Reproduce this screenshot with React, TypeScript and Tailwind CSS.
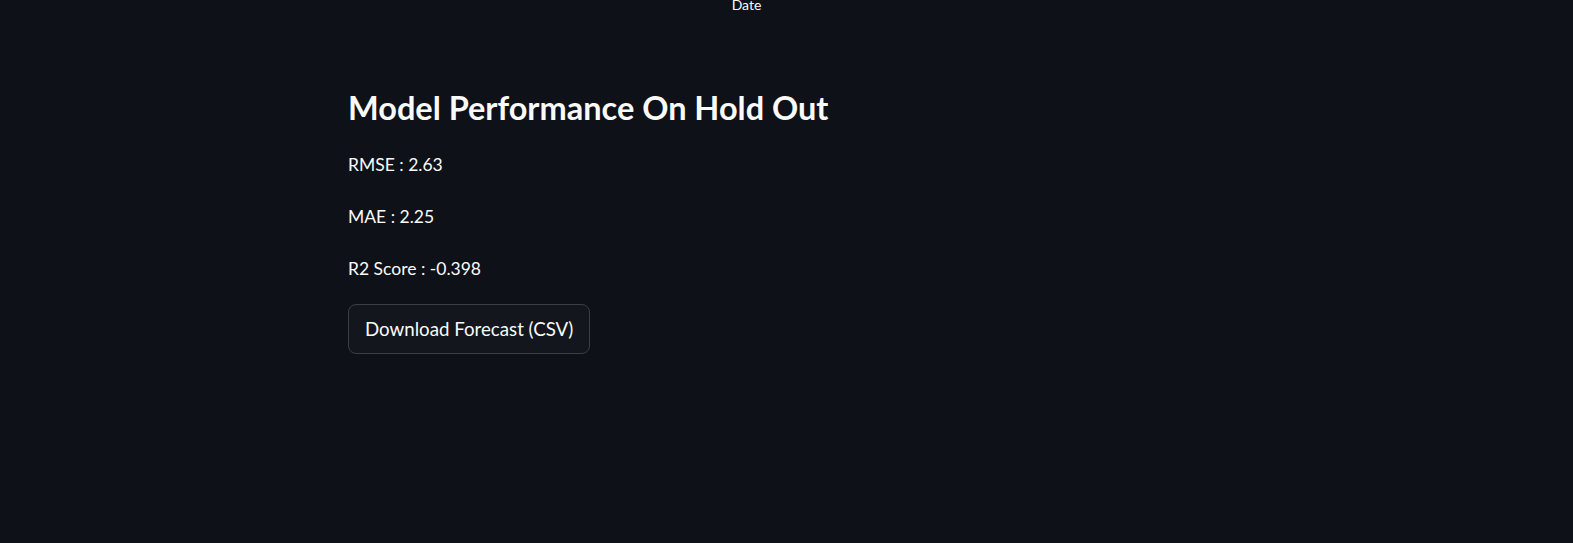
export default function App() {
  return (
    <div className="w-full h-[543px] bg-[#0e1117] text-[#fafafa] overflow-hidden" style={{ fontFamily: 'Lato, "Noto Sans", sans-serif' }}>
      {/* chart axis label left over from plot above */}
      <div className="h-[14px] flex justify-center">
        <span className="text-[14px] leading-[14px] -mt-[2px] ml-[-80px]">Date</span>
      </div>
      <div className="mx-auto w-[877px] pt-[74px]">
        <h3 className="text-[32.5px] leading-[40px] font-bold">Model Performance On Hold Out</h3>
        <div className="mt-[25px] flex flex-col gap-[28px] text-[17.5px] leading-[24px]">
          <p>RMSE : 2.63</p>
          <p>MAE : 2.25</p>
          <p>R2 Score : -0.398</p>
        </div>
        <button className="mt-[23px] h-[50px] px-[16px] rounded-[8px] border border-[#3b3e46] bg-[#13161d] text-[18.7px]">
          Download Forecast (CSV)
        </button>
      </div>
    </div>
  )
}
